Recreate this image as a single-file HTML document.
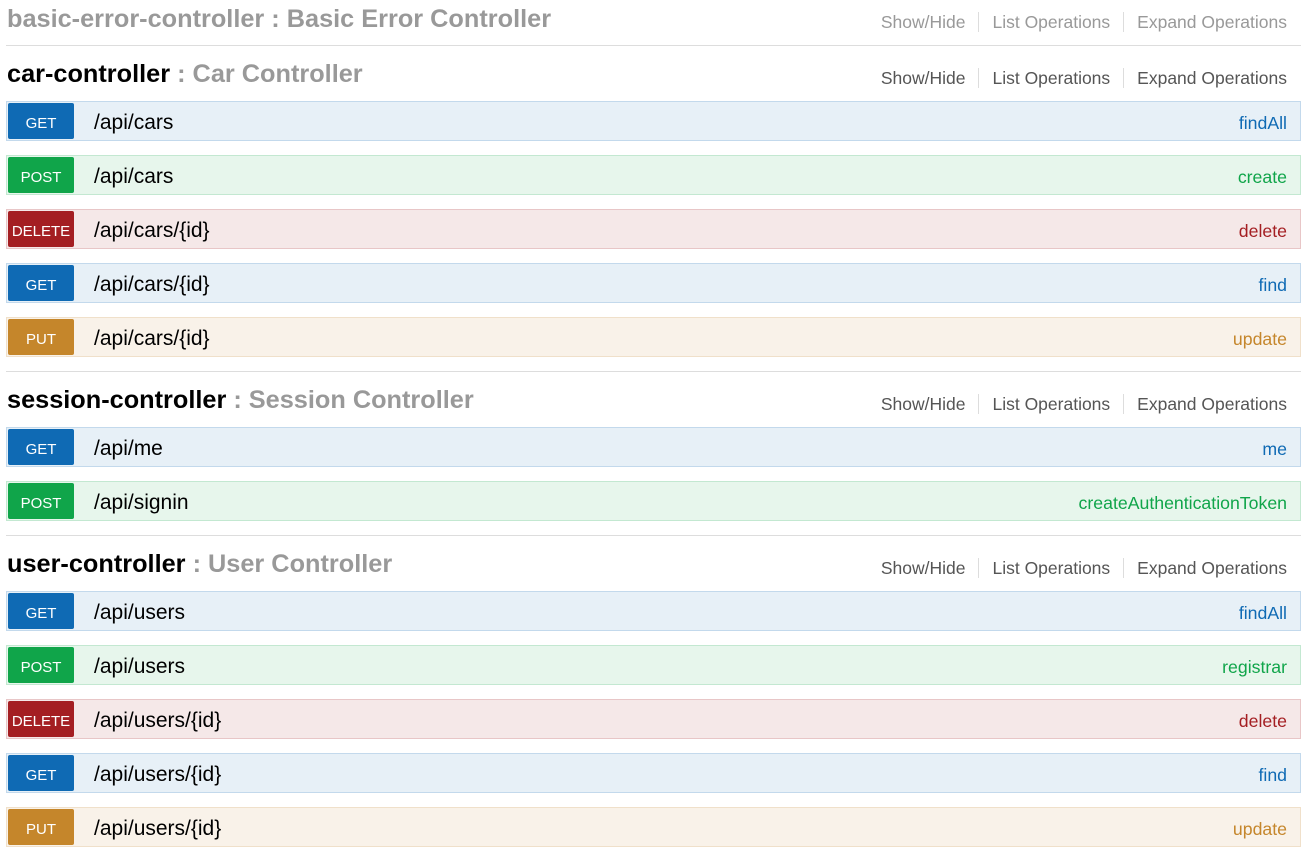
<!DOCTYPE html>
<html><head><meta charset="utf-8"><style>
body{margin:0;width:1314px;height:861px;background:#fff;font-family:"Liberation Sans",Arial,sans-serif;position:relative;overflow:hidden}
.h{position:absolute;left:7px;height:30px;line-height:30px;font-size:25.3px;font-weight:bold;color:#000;white-space:nowrap}
.h span{color:#999}
.lk{position:absolute;right:27px;height:22px;line-height:22px;font-size:17.5px;color:#555;white-space:nowrap}
.lk i{font-style:normal;padding:0 13px;border-left:1px solid #ddd}
.lk i:first-child{border-left:none}
.lk i:last-child{padding-right:0}
.ln{position:absolute;left:6px;width:1295px;height:1px;background:#ddd}
.r{position:absolute;left:6px;width:1293px;height:38px;border:1px solid}
.b{position:absolute;left:1px;top:1px;width:66px;height:36px;border-radius:2px;color:#fff;font-size:15px;line-height:42px;text-align:center}
.p{position:absolute;left:87px;top:0;line-height:42px;font-size:21px;color:#000}
.o{position:absolute;right:13px;top:0;line-height:42px;font-size:17.7px}
.g{background:#e7f0f7;border-color:#c3d9ec}.g .b{background:#0f6ab4}.g .o{color:#0f6ab4}
.po{background:#e7f6ec;border-color:#c3e8d1}.po .b{background:#10a54a}.po .o{color:#10a54a}
.d{background:#f5e8e8;border-color:#e8c6c7}.d .b{background:#a41e22}.d .o{color:#a41e22}
.pu{background:#f9f2e9;border-color:#f0e0ca}.pu .b{background:#c5862b}.pu .o{color:#c5862b}
</style></head><body>
<div class="h" style="top:4px;color:#999">basic-error-controller <span>: Basic Error Controller</span></div>
<div class="lk" style="top:11px;color:#999"><i>Show/Hide</i><i>List Operations</i><i>Expand Operations</i></div>
<div class="ln" style="top:45px"></div>

<div class="h" style="top:59px">car-controller <span>: Car Controller</span></div>
<div class="lk" style="top:67px"><i>Show/Hide</i><i>List Operations</i><i>Expand Operations</i></div>
<div class="r g" style="top:101px"><div class="b">GET</div><div class="p">/api/cars</div><div class="o">findAll</div></div>
<div class="r po" style="top:155px"><div class="b">POST</div><div class="p">/api/cars</div><div class="o">create</div></div>
<div class="r d" style="top:209px"><div class="b">DELETE</div><div class="p">/api/cars/{id}</div><div class="o">delete</div></div>
<div class="r g" style="top:263px"><div class="b">GET</div><div class="p">/api/cars/{id}</div><div class="o">find</div></div>
<div class="r pu" style="top:317px"><div class="b">PUT</div><div class="p">/api/cars/{id}</div><div class="o">update</div></div>
<div class="ln" style="top:371px"></div>

<div class="h" style="top:385px">session-controller <span>: Session Controller</span></div>
<div class="lk" style="top:393px"><i>Show/Hide</i><i>List Operations</i><i>Expand Operations</i></div>
<div class="r g" style="top:427px"><div class="b">GET</div><div class="p">/api/me</div><div class="o">me</div></div>
<div class="r po" style="top:481px"><div class="b">POST</div><div class="p">/api/signin</div><div class="o">createAuthenticationToken</div></div>
<div class="ln" style="top:535px"></div>

<div class="h" style="top:549px">user-controller <span>: User Controller</span></div>
<div class="lk" style="top:557px"><i>Show/Hide</i><i>List Operations</i><i>Expand Operations</i></div>
<div class="r g" style="top:591px"><div class="b">GET</div><div class="p">/api/users</div><div class="o">findAll</div></div>
<div class="r po" style="top:645px"><div class="b">POST</div><div class="p">/api/users</div><div class="o">registrar</div></div>
<div class="r d" style="top:699px"><div class="b">DELETE</div><div class="p">/api/users/{id}</div><div class="o">delete</div></div>
<div class="r g" style="top:753px"><div class="b">GET</div><div class="p">/api/users/{id}</div><div class="o">find</div></div>
<div class="r pu" style="top:807px"><div class="b">PUT</div><div class="p">/api/users/{id}</div><div class="o">update</div></div>
</body></html>
